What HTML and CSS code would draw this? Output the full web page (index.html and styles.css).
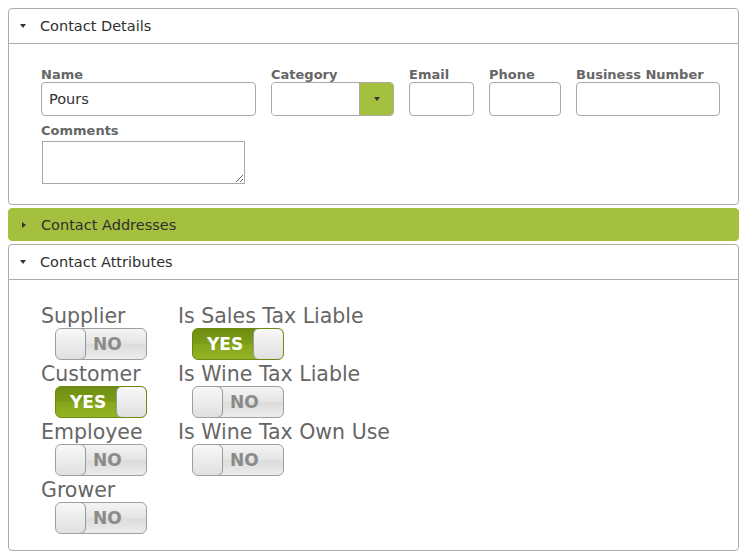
FILE: index.html
```html
<!DOCTYPE html>
<html>
<head>
<meta charset="utf-8">
<link rel="stylesheet" href="styles.css">
</head>
<body>
<div class="panel first">
  <div class="phead"><span class="caret down"></span><span class="ptitle">Contact Details</span></div>
  <div class="pbody form">
    <div class="row">
      <div class="field"><label>Name</label><input class="inp w-name" type="text" value="Pours"></div>
      <div class="field"><label>Category</label>
        <div class="combo"><span class="combo-in"></span><span class="combo-btn"><span class="caret down"></span></span></div>
      </div>
      <div class="field"><label>Email</label><input class="inp w-email" type="text"></div>
      <div class="field"><label>Phone</label><input class="inp w-phone" type="text"></div>
      <div class="field"><label>Business Number</label><input class="inp w-bn" type="text"></div>
    </div>
    <div class="row">
      <div class="field"><label>Comments</label><textarea class="ta"></textarea></div>
    </div>
  </div>
</div>
<div class="panel green">
  <div class="phead nob"><span class="caret right"></span><span class="ptitle">Contact Addresses</span></div>
</div>
<div class="panel">
  <div class="phead"><span class="caret down"></span><span class="ptitle">Contact Attributes</span></div>
  <div class="pbody attrs">
    <div class="attr"><div class="alabel">Supplier</div><div class="tg off"><span class="knob"></span><span class="tt">NO</span></div></div>
    <div class="attr"><div class="alabel">Is Sales Tax Liable</div><div class="tg on"><span class="tt">YES</span><span class="knob"></span></div></div>
    <div class="attr"><div class="alabel">Customer</div><div class="tg on"><span class="tt">YES</span><span class="knob"></span></div></div>
    <div class="attr"><div class="alabel">Is Wine Tax Liable</div><div class="tg off"><span class="knob"></span><span class="tt">NO</span></div></div>
    <div class="attr"><div class="alabel">Employee</div><div class="tg off"><span class="knob"></span><span class="tt">NO</span></div></div>
    <div class="attr"><div class="alabel">Is Wine Tax Own Use</div><div class="tg off"><span class="knob"></span><span class="tt">NO</span></div></div>
    <div class="attr"><div class="alabel">Grower</div><div class="tg off"><span class="knob"></span><span class="tt">NO</span></div></div>
  </div>
</div>
</body>
</html>
```
FILE: styles.css
```css
* { box-sizing: border-box; }
body {
  margin: 8px;
  font-family: "DejaVu Sans", Verdana, sans-serif;
  color: #333;
  background: #fff;
  width: 731px;
}
.panel {
  border: 1px solid #acacac;
  border-radius: 4px;
  background: #fff;
}
.panel.first { margin-bottom: 3px; }
.panel.green {
  background: #a5bf3f;
  border-color: #a5bf3f;
  margin-bottom: 3px;
}
.phead {
  height: 35px;
  display: flex;
  align-items: center;
  border-bottom: 1px solid #acacac;
  padding-left: 11px;
  font-size: 14.5px;
  color: #2f2f2f;
}
.phead.nob { border-bottom: none; height: 31px; }
.ptitle { margin-left: 14px; }
.caret {
  display: inline-block;
  width: 0; height: 0;
}
.caret.down {
  border-left: 3.5px solid transparent;
  border-right: 3.5px solid transparent;
  border-top: 4px solid #333;
}
.caret.right {
  border-top: 3.5px solid transparent;
  border-bottom: 3.5px solid transparent;
  border-left: 4px solid #333;
  margin-left: 2px;
  margin-right: 1px;
}
.pbody.form {
  padding: 23px 32px 20px 32px;
  display: flex;
  flex-direction: column;
  gap: 7px;
}
.row { display: flex; gap: 15px; }
.field { display: flex; flex-direction: column; }
.field label {
  font-size: 13px;
  font-weight: bold;
  color: #666;
  line-height: 15px;
}
.inp {
  height: 34px;
  border: 1px solid #a8a8a8;
  border-radius: 4px;
  font-family: "DejaVu Sans", Verdana, sans-serif;
  font-size: 14.5px;
  color: #333;
  padding: 0 7px;
  outline: none;
  margin: 0;
}
.w-name { width: 215px; }
.w-email { width: 65px; }
.w-phone { width: 72px; }
.w-bn { width: 144px; }
.combo {
  display: flex;
  width: 123px;
  height: 34px;
  border: 1px solid #a8a8a8;
  border-radius: 4px;
  overflow: hidden;
}
.combo-in { flex: 1; background: #fff; border-right: 1px solid #a8a8a8; }
.combo-btn {
  width: 33px;
  background: #a5bf3f;
  display: flex;
  align-items: center;
  justify-content: center;
}
.ta {
  width: 203px;
  height: 43px;
  border: 1px solid #a8a8a8;
  margin: 3px 0 0 1px;
  resize: both;
  font-family: "DejaVu Sans", sans-serif;
}
.pbody.attrs {
  padding: 25px 32px 16px 32px;
  display: grid;
  grid-template-columns: 137px auto;
  row-gap: 3px;
}
.attr { display: flex; flex-direction: column; align-items: flex-start; }
.alabel {
  font-size: 20.5px;
  line-height: 23px;
  color: #666;
  white-space: nowrap;
}
.tg {
  margin-left: 14px;
  width: 92px;
  height: 32px;
  border: 1px solid #9f9f9f;
  border-radius: 6px;
  display: flex;
  align-items: stretch;
  overflow: hidden;
  font-weight: bold;
  font-size: 17px;
}
.tg.off {
  background: linear-gradient(#f4f4f4 0%, #e4e4e4 50%, #dcdcdc 52%, #ececec 100%);
}
.tg.on {
  border-color: #6a8a10;
  background: linear-gradient(#6f8e12 0%, #7d9c17 50%, #86a61c 52%, #94b424 100%);
}
.knob {
  width: 31px;
  border: 1px solid #9a9a9a;
  border-radius: 6px;
  margin: -1px;
  background: linear-gradient(#f8f8f8, #e0e0e0);
  box-shadow: 0 0 1px rgba(0,0,0,0.15);
}
.tt {
  flex: 1;
  display: flex;
  align-items: center;
}
.tg.off .tt { color: #8a8a8a; padding-left: 8px; }
.tg.on .tt { color: #fff; padding-left: 14px; }
```
